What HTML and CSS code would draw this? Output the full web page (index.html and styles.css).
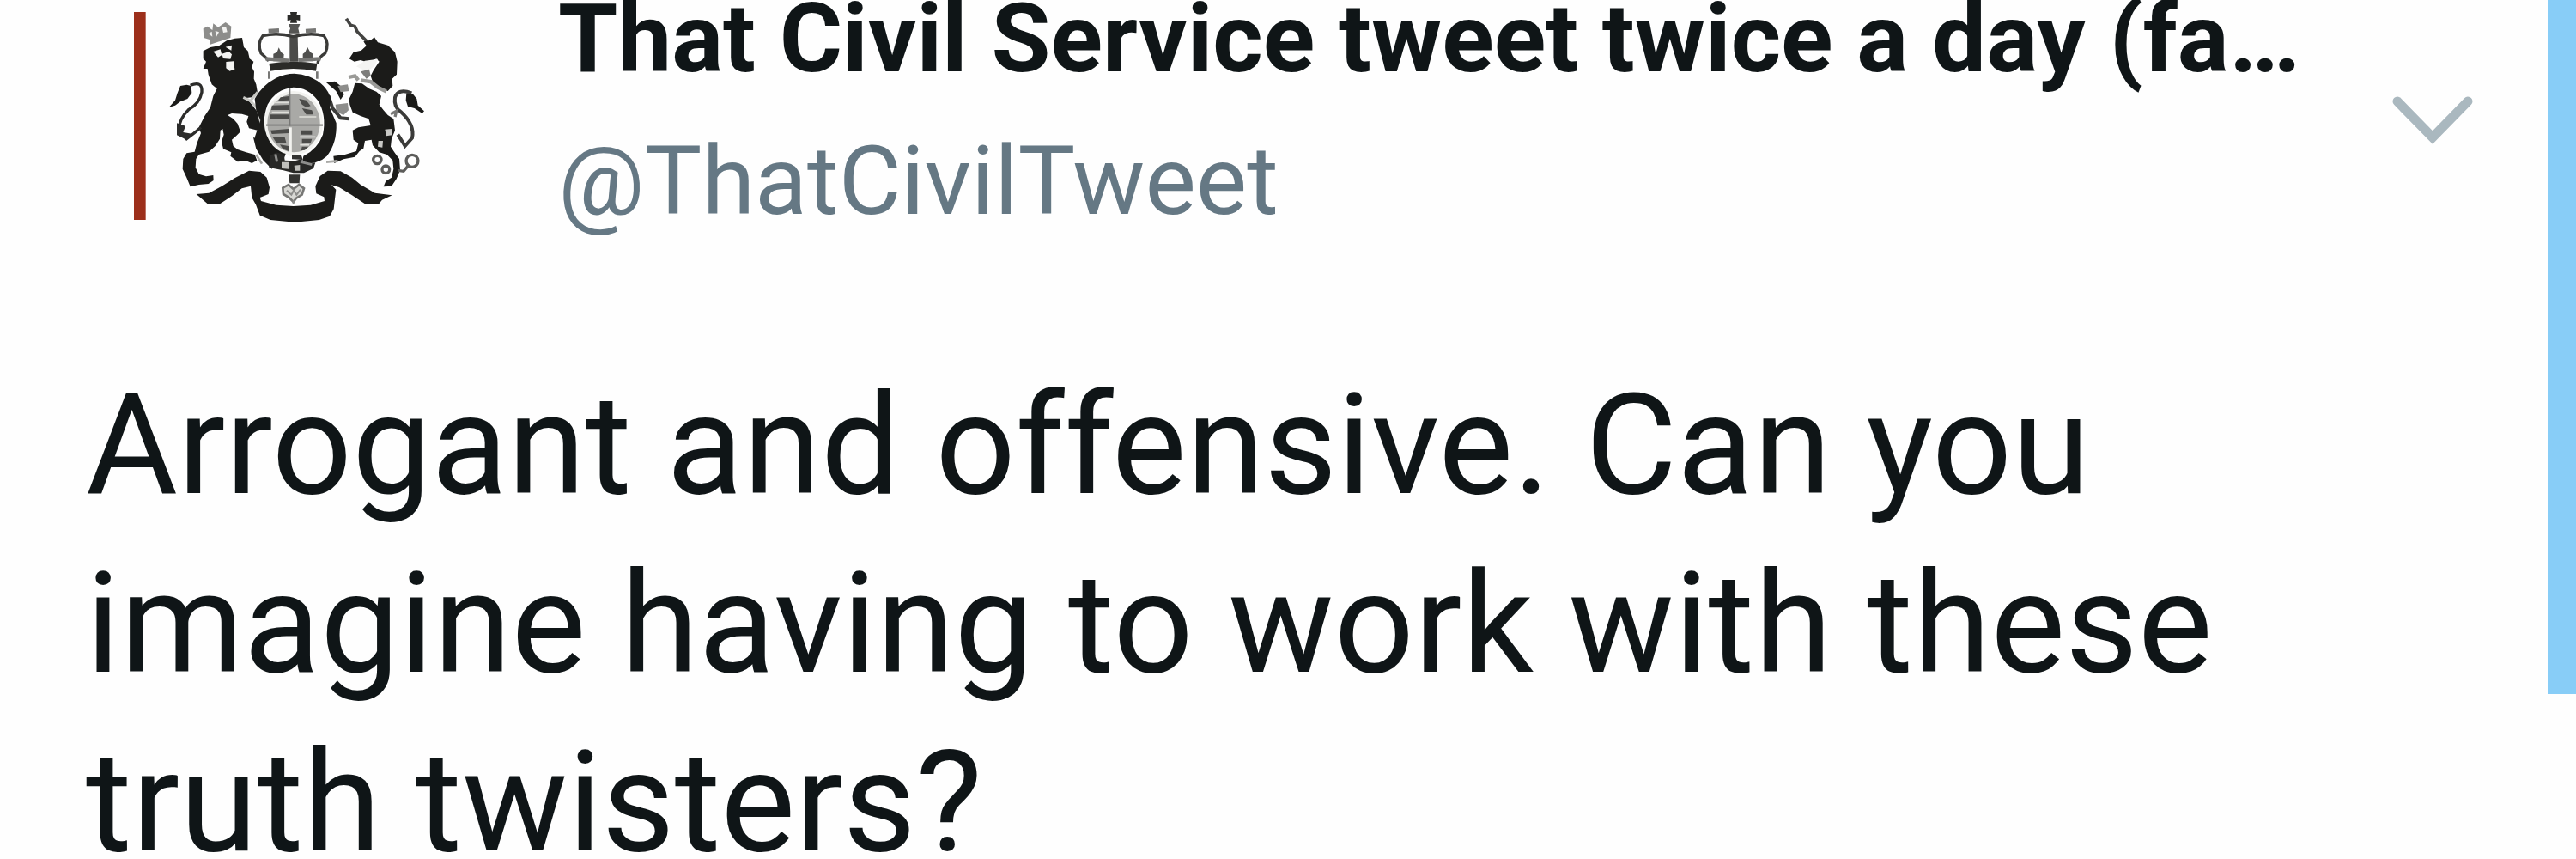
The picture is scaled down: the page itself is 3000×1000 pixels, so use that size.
FILE: index.html
```html
<!DOCTYPE html>
<html lang="en">
<head>
  <meta charset="UTF-8" />
  <meta name="viewport" content="width=device-width, initial-scale=1.0"/>
  <title>That Civil Service tweet</title>
  <link rel="stylesheet" href="styles.css">
</head>
<body>
  <main class="page">
    <article class="tweet">
      <header class="tweet-header">
        <svg class="avatar" viewBox="0 0 1200 1140" role="img" aria-label="Royal coat of arms">
          <rect x="78" y="42" width="41" height="726" fill="#9c2f1b"/>

          <!-- lion -->
          <g fill="#1b1b19">
            <path d="M320 178L345 165L375 160L402 142L430 134L456 132L462 165L476 178L482 205L496 215L490 235L498 250L497 275L505 295L510 325L490 340L470 342L490 365L505 385L525 410L530 445L510 455L480 448L472 425L478 405L455 398L420 396L405 402L425 415L440 432L450 460L436 474L420 488L425 510L440 522L470 532L500 540L508 560L490 570L470 562L440 565L415 545L418 532L390 520L384 495L392 470L388 450L380 455L378 485L362 510L340 530L305 540L295 555L293 585L305 608L330 616L355 612L356 630L338 642L305 645L275 652L262 620L248 590L250 555L262 535L290 530L298 500L312 465L305 445L325 405L345 375L355 335L368 310L350 295L338 260L335 240L320 240L330 215L320 205Z"/>
            <path d="M240 300L262 296L278 300L280 325L265 345L240 355L222 368L200 375L222 350L230 325Z"/>
            <path d="M495 480L535 492L575 550L560 590L530 560L505 520Z"/>
          </g>
          <path d="M275 298Q318 280 315 322Q308 360 270 382Q235 415 235 455L262 485Q290 465 312 445" fill="none" stroke="#2c2c2a" stroke-width="10"/>
          <path d="M228 430L258 440L250 462L285 468L262 488L228 472Z" fill="#2c2c2a"/>
          <path d="M355 180L380 172L385 192L372 200ZM385 188L410 180L420 190L415 206L390 204ZM400 216L426 214L430 242L412 248L400 238ZM398 164L420 158L418 176Z" fill="#f4f4f2"/>
          <path d="M320 100L335 92L352 105L355 82L372 95L398 78L418 92L415 132L345 155L342 138L322 132Z" fill="#8d8d8b"/>
          <path d="M338 118L350 110L352 128ZM362 108L375 112L366 128ZM385 92L400 96L404 112L390 114Z" fill="#f2f2f0"/>
          <path d="M460 340L485 352L510 322M485 352L510 380L522 430L540 450" fill="none" stroke="#c7c7c3" stroke-width="9"/>

          <!-- unicorn -->
          <path d="M820 65L835 88L850 92L858 110L895 148" fill="none" stroke="#444442" stroke-width="11" stroke-linejoin="round"/>
          <g fill="#1b1b19">
            <path d="M880 145L905 140L918 130L930 148L965 158L990 182L998 215L996 260L980 275L982 300L965 318L940 312L915 295L905 265L915 245L935 215L925 205L895 218L870 210L848 215L830 205L845 182L872 176L890 160Z"/>
            <path d="M850 290L875 292L900 310L925 320L942 335L935 365L950 385L965 402L985 415L990 455L978 485L975 512L990 535L1005 555L1008 595L995 625L978 650L950 652L958 632L978 620L985 590L982 560L962 540L935 532L912 508L908 488L885 492L880 518L866 528L850 548L810 556L778 570L775 545L815 540L855 528L862 500L845 488L842 455L862 445L905 438L898 415L870 405L842 392L832 365L830 345L842 320Z"/>
            <path d="M1030 325L1052 328L1066 345L1070 368L1092 388L1085 396L1058 378L1035 372L1028 350Z"/>
            <path d="M750 288L780 284L800 300L812 330L800 348L784 318Z"/>
          </g>
          <path d="M855 232L885 212L930 206L918 232L890 250Z" fill="#f4f4f2"/>
          <path d="M870 250L900 242L905 265L890 275Z" fill="#7d7d7b"/>
          <path d="M1048 325Q1000 308 990 340Q985 375 1010 390Q1060 435 1050 482L1025 510L1000 470" fill="none" stroke="#3b3b39" stroke-width="12"/>
          <path d="M975 398L995 388L990 408" fill="none" stroke="#777775" stroke-width="10"/>
          <path d="M828 270L850 265L862 280M870 280L905 285L930 305L960 320" fill="none" stroke="#9a9a97" stroke-width="13"/>
          <path d="M790 300L825 295L830 318L800 322ZM782 365L825 360L828 385L810 402L785 390Z" fill="#8d8d8b"/>
          <path d="M758 335L772 378L800 412L830 415" fill="none" stroke="#3b3b39" stroke-width="12"/>
          <path d="M955 452L978 450L980 472L960 475ZM932 492L948 492L946 515L930 512Z" fill="#c9c9c6"/>

          <!-- chain -->
          <g fill="none" stroke="#5c5c5a" stroke-width="10">
            <circle cx="928" cy="558" r="14"/>
            <circle cx="958" cy="592" r="13"/>
            <circle cx="1050" cy="562" r="21"/>
            <path d="M1000 595L1020 598L1035 580"/>
          </g>

          <!-- crown -->
          <g fill="#2a2a28">
            <path d="M624 42L648 42L646 54L658 52L658 72L646 70L648 80L624 80L626 70L614 72L614 52L626 54Z"/>
            <path d="M618 84L658 84L652 100L656 116L618 116L624 100Z" fill="#555553"/>
            <path d="M622 125L650 125L652 215L622 215Z" fill="#4b4b49"/>
            <path d="M550 222Q635 208 718 222L714 248Q635 232 555 248Z"/>
            <path d="M565 188L578 182L584 166L592 182L602 190L600 212L565 214ZM668 188L676 182L684 164L694 182L704 188L704 214L668 212Z" fill="#50504e"/>
          </g>
          <path d="M548 214Q545 205 522 186Q508 150 528 125Q580 112 634 128Q695 112 742 125Q762 150 746 186Q722 200 720 222" fill="none" stroke="#3a3a38" stroke-width="10"/>
          <path d="M548 108L585 106M678 108L714 106" stroke="#777775" stroke-width="14"/>
          <path d="M538 205L622 212M652 210L730 205" stroke="#777775" stroke-width="13"/>
          <path d="M550 250L550 275M718 250L718 275" stroke="#777775" stroke-width="8"/>

          <!-- garter and shield -->
          <path fill-rule="evenodd" fill="#1b1b19" d="M500 345Q525 298 575 272Q635 245 690 268Q750 292 766 345L762 375L785 430Q788 500 752 545Q725 572 665 572L670 545Q720 520 738 470Q752 400 720 350Q685 305 635 305Q575 310 545 365Q520 430 548 480Q575 520 610 532L600 560L548 548Q515 520 500 480L520 420L505 385Z"/>
          <ellipse cx="636" cy="430" rx="102" ry="112" fill="#f2f2ef"/>
          <ellipse cx="636" cy="430" rx="92" ry="102" fill="#a9a9a6"/>
          <path d="M590 340L618 336L618 350L582 352ZM560 368L622 366L622 384L558 384ZM555 400L620 400L620 416L552 416ZM555 455L620 450L620 465L560 468ZM562 478L605 480L610 498L575 498ZM588 505L618 510L618 528L598 520Z" fill="#4b4b49"/>
          <path d="M655 345L680 350L695 370L680 375L665 365ZM665 378L700 385L705 400L680 400ZM660 455L700 455L700 470L660 470ZM665 485L700 485L695 500L665 502ZM665 512L688 512L675 524L662 526Z" fill="#4b4b49"/>
          <path d="M568 358L618 358M560 392L620 392M655 408L715 408M658 478L712 478M658 506L690 506" stroke="#deded9" stroke-width="5"/>
          <path d="M540 437L738 437" stroke="#888886" stroke-width="7"/>
          <path d="M622 308L622 440" stroke="#777775" stroke-width="6"/>
          <path d="M625 445L625 545" stroke="#f2f2ef" stroke-width="9"/>

          <!-- buckle and pendant -->
          <path d="M552 545L575 532L602 540L605 560L640 562L665 555L665 570L712 568L705 588L672 604L635 604L600 595L550 585Z" fill="#282826"/>
          <path d="M594 566L618 566L618 590L594 588ZM638 578L658 576L658 596L640 596Z" fill="#bfbfbb"/>
          <path d="M572 538L578 565M660 565L700 575" stroke="#8d8d8b" stroke-width="9"/>
          <path d="M630 540L662 540L668 558L630 556Z" fill="#333331"/>
          <path d="M618 610L658 610L656 640L622 640Z" fill="#333331"/>
          <path d="M598 656L618 645L635 660L655 645L672 658L665 680L645 692L635 705L620 690L600 678Z" fill="#d8d8d4" stroke="#777775" stroke-width="8"/>
          <path d="M612 665L628 680L636 665L646 680L660 662M635 700L635 714" fill="none" stroke="#8d8d8b" stroke-width="6"/>

          <!-- ribbon -->
          <path d="M296 678L340 674L385 650L430 622L480 596L520 600L542 620L552 655L548 678L518 690L522 702L575 716L635 720L695 716L744 702L742 688L715 676L712 650L728 615L755 596L800 598L840 620L870 645L920 674L980 682L945 698L932 714L885 712L840 682L795 654L768 646L784 662L780 695L776 730L762 755L725 768L640 776L555 768L518 752L504 715L490 690L486 650L455 658L420 685L375 714L335 712Z" fill="#1b1b19"/>
          <path d="M750 566L790 562M505 540L525 572" stroke="#a9a9a6" stroke-width="8"/>
        </svg>

        <div class="names">
          <h1>That Civil Service tweet twice a day (fa…</h1>
          <a class="handle" href="#">@ThatCivilTweet</a>
        </div>

        <button type="button" class="btn-more" aria-label="More options">
          <svg viewBox="0 0 100 60" fill="none" stroke="#aab8bf" stroke-width="11" stroke-linecap="round">
            <path d="M9 8L50 50L91 8"/>
          </svg>
        </button>
      </header>

      <p class="tweet-text">Arrogant and offensive. Can you imagine having to work with these truth twisters?</p>
    </article>
    <div class="side-bar"></div>
  </main>
</body>
</html>
```
FILE: styles.css
```css
* { margin: 0; padding: 0; box-sizing: border-box; }
body {
  font-family: Roboto, sans-serif;
  background: #fefefe;
  color: #0f1517;
  height: 100vh;
  overflow: hidden;
}
.page {
  display: flex;
  align-items: flex-start;
}
.tweet {
  flex: 1;
  min-width: 0;
}
.tweet-header {
  display: flex;
  align-items: flex-start;
  padding: 0 84px 0 130px;
}
.avatar {
  width: 400px;
  height: 380px;
  flex-shrink: 0;
}
.names {
  flex: 1;
  min-width: 0;
  margin-left: 120px;
}
.names h1 {
  font-size: 112px;
  line-height: 90px;
  font-weight: bold;
  padding-bottom: 28px;
  margin-bottom: 48px;
  white-space: nowrap;
  overflow: hidden;
  text-overflow: ellipsis;
}
.handle {
  display: block;
  font-size: 112px;
  line-height: 90px;
  color: #657884;
  text-decoration: none;
}
.btn-more {
  width: 100px;
  height: 60px;
  margin-top: 110px;
  border: none;
  background: none;
  cursor: pointer;
}
.btn-more svg {
  display: block;
  width: 100%;
}
.tweet-text {
  font-size: 164px;
  line-height: 208px;
  padding: 34px 320px 0 100px;
}
.side-bar {
  width: 33px;
  height: 808px;
  background: #88cdf7;
}
```
